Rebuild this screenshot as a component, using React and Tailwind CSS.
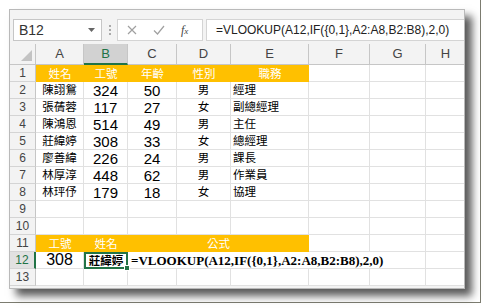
import React from 'react';

const cjk = { fontFamily: '"Noto Sans CJK TC", "Liberation Sans", sans-serif' };

const rows = [
  ['陳詡鴛', '324', '50', '男', '經理'],
  ['張蒨蓉', '117', '27', '女', '副總經理'],
  ['陳鴻恩', '514', '49', '男', '主任'],
  ['莊緯婷', '308', '33', '女', '總經理'],
  ['廖善緯', '226', '24', '男', '課長'],
  ['林厚淳', '448', '62', '男', '作業員'],
  ['林玶伃', '179', '18', '女', '協理'],
];

const letters = ['A', 'B', 'C', 'D', 'E', 'F', 'G', 'H'];

function RowHead({ n, active }) {
  return active ? (
    <div className="flex items-center justify-center bg-[#e1e1e1] border-b border-[#d4d4d4] border-r-2 border-r-[#217346] text-[12px] text-[#217346] font-['Liberation_Sans']">
      {n}
    </div>
  ) : (
    <div className="flex items-center justify-center bg-[#f3f3f3] border-b border-[#d4d4d4] border-r border-r-[#c6c6c6] text-[12px] text-[#444] font-['Liberation_Sans']">
      {n}
    </div>
  );
}

function Blank({ n = 1 }) {
  return Array.from({ length: n }).map((_, i) => (
    <div key={i} className="border-r border-b border-[#e1e1e1]" />
  ));
}

function Orange({ children, className = '' }) {
  return (
    <div
      className={'flex items-center justify-center bg-[#ffc000] text-white text-[11.5px] leading-none ' + className}
      style={cjk}
    >
      {children}
    </div>
  );
}

export default function App() {
  return (
    <div className="w-[484px] h-[308px] bg-white overflow-hidden">
      <div className="w-[481px] h-[303px] border-r border-b border-[#7c7c70] pt-[9px] pl-[9px]">
        <div className="w-[456px] h-[280px] border border-[#b9b9b9] bg-[#f3f3f3] shadow-[7px_7px_8px_rgba(0,0,0,0.65)] overflow-hidden flex flex-col">
          {/* formula bar */}
          <div className="h-[34px] flex items-start pt-[9px] pl-[3px] shrink-0">
            <div className="w-[89px] h-[22px] bg-white border border-[#c6c6c6] flex items-center justify-between pl-[5px] pr-[6px]">
              <span className="text-[14px] text-[#333] font-['Liberation_Sans']">B12</span>
              <svg width="7" height="4" viewBox="0 0 7 4"><path d="M0 0h7L3.5 4z" fill="#666" /></svg>
            </div>
            <div className="w-[15px] h-[22px] flex flex-col items-center justify-center gap-[2px]">
              <span className="w-[2px] h-[2px] bg-[#aaa]" />
              <span className="w-[2px] h-[2px] bg-[#aaa]" />
              <span className="w-[2px] h-[2px] bg-[#aaa]" />
            </div>
            <div className="w-[86px] h-[22px] bg-white border border-[#d4d4d4] flex items-center pl-[9px] gap-[16px]">
              <svg width="10" height="10" viewBox="0 0 10 10"><path d="M1 1l8 8M9 1l-8 8" stroke="#a0a0a0" strokeWidth="1.2" /></svg>
              <svg width="12" height="10" viewBox="0 0 12 10"><path d="M1 5.5l3.5 3.5L11 1" stroke="#a0a0a0" strokeWidth="1.2" fill="none" /></svg>
              <span className="text-[12px] italic text-[#444] font-['Liberation_Serif']">
                f<span className="text-[9px]">x</span>
              </span>
            </div>
            <div className="ml-[3px] flex-1 h-[22px] bg-white border border-[#d4d4d4] border-r-0 flex items-center pl-[9px]">
              <span className="text-[12px] text-[#222] font-['Liberation_Sans'] whitespace-nowrap">
                =VLOOKUP(A12,IF({'{'}0,1{'}'},A2:A8,B2:B8),2,0)
              </span>
            </div>
          </div>

          {/* sheet */}
          <div className="bg-white grid grid-cols-[26px_48px_44px_49px_54px_78px_61px_56px_40px] grid-rows-[21px_repeat(13,17px)]">
            {/* corner */}
            <div className="relative bg-[#f3f3f3] border-r border-b border-[#c6c6c6]">
              <svg className="absolute right-[3px] bottom-[3px]" width="11" height="11" viewBox="0 0 11 11"><path d="M11 0v11H0z" fill="#c3c3c3" /></svg>
            </div>
            {letters.map((l) =>
              l === 'B' ? (
                <div key={l} className="flex items-center justify-center bg-[#d2d2d2] border-r border-[#c6c6c6] border-b-2 border-b-[#217346] text-[13px] text-[#217346] font-['Liberation_Sans']">
                  {l}
                </div>
              ) : (
                <div key={l} className="flex items-center justify-center bg-[#f3f3f3] border-r border-b border-[#c6c6c6] text-[13px] text-[#444] font-['Liberation_Sans']">
                  {l}
                </div>
              )
            )}

            {/* row 1 */}
            <RowHead n={1} />
            <Orange>姓名</Orange>
            <Orange>工號</Orange>
            <Orange>年齡</Orange>
            <Orange>性別</Orange>
            <Orange>職務</Orange>
            <Blank n={3} />

            {rows.map((r, i) => (
              <React.Fragment key={i}>
                <RowHead n={i + 2} />
                <div className="flex items-center justify-center border-r border-b border-[#e1e1e1] text-[11.5px] text-black leading-none" style={cjk}>{r[0]}</div>
                <div className="flex items-center justify-center border-r border-b border-[#e1e1e1] text-[15px] text-black font-['Liberation_Sans'] leading-none">{r[1]}</div>
                <div className="flex items-center justify-center border-r border-b border-[#e1e1e1] text-[15px] text-black font-['Liberation_Sans'] leading-none">{r[2]}</div>
                <div className="flex items-center justify-center border-r border-b border-[#e1e1e1] text-[11.5px] text-black leading-none" style={cjk}>{r[3]}</div>
                <div className="flex items-center pl-[2px] border-r border-b border-[#e1e1e1] text-[11.5px] text-black leading-none" style={cjk}>{r[4]}</div>
                <Blank n={3} />
              </React.Fragment>
            ))}

            {/* rows 9, 10 */}
            <RowHead n={9} />
            <Blank n={8} />
            <RowHead n={10} />
            <Blank n={8} />

            {/* row 11 */}
            <RowHead n={11} />
            <Orange>工號</Orange>
            <Orange>姓名</Orange>
            <Orange className="col-span-3">公式</Orange>
            <Blank n={3} />

            {/* row 12 */}
            <RowHead n={12} active />
            <div className="flex items-center justify-center border-r border-b border-[#e1e1e1] text-[16px] text-black font-['Liberation_Sans'] leading-none">308</div>
            <div className="relative flex items-center justify-center border-2 border-[#217346] text-[11.5px] font-bold text-black leading-none" style={cjk}>
              莊緯婷
              <span className="absolute right-[-4px] bottom-[-4px] w-[6px] h-[6px] bg-[#217346] border border-white" />
            </div>
            <div className="col-span-5 flex items-center pl-[3px] border-r border-b border-[#e1e1e1] text-[13px] font-bold text-black font-['Liberation_Serif'] whitespace-nowrap leading-none">
              =VLOOKUP(A12,IF({'{'}0,1{'}'},A2:A8,B2:B8),2,0)
            </div>
            <Blank n={1} />

            {/* row 13 */}
            <RowHead n={13} />
            <Blank n={8} />
          </div>
        </div>
      </div>
    </div>
  );
}
